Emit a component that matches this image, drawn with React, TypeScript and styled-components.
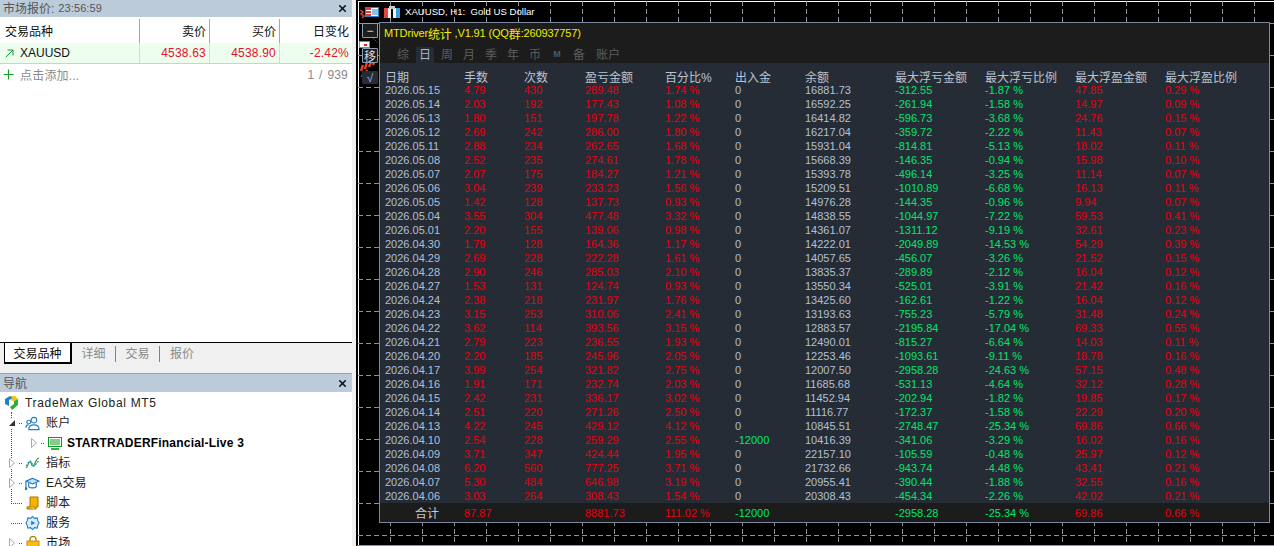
import React from 'react';
import styled, { createGlobalStyle } from 'styled-components';
import { X } from 'lucide-react';

const UI_FONT = `"Liberation Sans", "Noto Sans CJK SC", sans-serif`;

const GlobalStyle = createGlobalStyle`
  html, body {
    margin: 0;
    padding: 0;
    height: 100%;
    overflow: hidden;
    background: #f0f0f0;
    font-family: ${UI_FONT};
  }
  #root { height: 100%; }
  * { box-sizing: border-box; }
`;

const Page = styled.div`
  display: flex;
  width: 1274px;
  height: 546px;
  overflow: hidden;
`;

/* ---------- left side ---------- */

const Sidebar = styled.aside`
  width: 352px;
  flex: none;
  display: flex;
  flex-direction: column;
  background: #fff;
`;

const TitleBar = styled.div`
  flex: none;
  height: ${p => p.$h}px;
  display: flex;
  align-items: center;
  justify-content: space-between;
  padding: 0 4px 0 3px;
  background: #bccbda;
  color: #555;
  font-size: 12px;
  border-top: ${p => (p.$line ? '1px solid #a0a0a0' : 'none')};
`;

const TitleText = styled.span`
  display: flex;
  align-items: center;
  margin-bottom: 2px;
`;

const Clock = styled.span`
  font-size: 11px;
  margin-left: 4px;
  letter-spacing: 0.1px;
`;

const MarketWatch = styled.section`
  flex: 1;
  padding-top: 2px;
  font-size: 12px;
`;

const QuoteRow = styled.div`
  display: grid;
  grid-template-columns: 139px 70px 70px 73px;
  height: ${p => p.$h}px;
  background: ${p => p.$bg || 'transparent'};
  border-bottom: ${p => (p.$underline ? '1px solid #d0d0d0' : 'none')};
`;

const QuoteCell = styled.div`
  display: flex;
  align-items: center;
  justify-content: ${p => (p.$first ? 'flex-start' : 'flex-end')};
  gap: 6px;
  padding: ${p => (p.$first ? '0 0 0 5px' : '0 3px 0 0')};
  padding-bottom: ${p => (p.$head ? 2 : 0)}px;
  color: ${p => p.$color || '#111'};
  border-left: ${p => (p.$first ? 'none' : `1px solid ${p.$sep || '#a8a8a8'}`)};
  letter-spacing: ${p => (p.$num ? '0.2px' : '0')};
`;

const AddRow = styled.div`
  display: flex;
  align-items: center;
  justify-content: space-between;
  height: 21px;
  padding: 0 4px 0 0;
  color: #8a8a8a;
  letter-spacing: 0.2px;
  word-spacing: 1.2px;
`;

const AddLabel = styled.span`
  display: flex;
  align-items: center;
  gap: 3px;
`;

const TabStrip = styled.div`
  flex: none;
  height: 31px;
  display: flex;
  align-items: flex-start;
  background: #f0f0f0;
  border-top: 1px solid #000;
  padding-left: 4px;
  font-size: 12px;
`;

const ActiveTab = styled.div`
  width: 68px;
  height: 22px;
  margin-top: -1px;
  padding-bottom: 1px;
  display: flex;
  align-items: center;
  justify-content: center;
  background: #fff;
  color: #111;
  border-style: solid;
  border-color: #000;
  border-width: 1px 2px 2px 1px;
`;

const Tab = styled.div`
  width: 44px;
  height: 16px;
  margin-top: 3px;
  padding-bottom: 3px;
  display: flex;
  align-items: center;
  justify-content: center;
  color: #8a8a8a;
  border-right: ${p => (p.$last ? 'none' : '1px solid #808080')};
`;

const Navigator = styled.section`
  flex: none;
  height: 154px;
  overflow: hidden;
  position: relative;
  padding-top: 1px;
  font-size: 12px;
  color: #222;
  &::before {
    content: '';
    position: absolute;
    left: 11px;
    top: 20px;
    height: 92px;
    border-left: 1px dotted #555;
  }
`;

const TreeRow = styled.div`
  height: 20px;
  display: flex;
  align-items: center;
  position: relative;
  padding-left: ${p => p.$indent}px;
`;

const ExpanderBox = styled.svg`
  flex: none;
  margin-right: 4px;
  position: relative;
  z-index: 1;
  background: #fff;
`;

const Dots = styled.span`
  width: ${p => p.$w}px;
  flex: none;
  margin-right: 3px;
  border-top: 1px dotted #555;
`;

const TreeIcon = styled.span`
  width: 15px;
  height: 16px;
  flex: none;
  margin-right: ${p => p.$gap}px;
  display: flex;
  align-items: center;
  justify-content: center;
`;

const TreeLabel = styled.span`
  font-weight: ${p => (p.$bold ? 700 : 400)};
  color: ${p => (p.$bold ? '#000' : '#222')};
  letter-spacing: ${p => (p.$bold ? '0.2px' : p.$latin ? '0.67px' : '0.2px')};
  margin-bottom: ${p => (p.$bold || p.$latin ? 0 : 3)}px;
  white-space: nowrap;
`;

/* ---------- chart side ---------- */

const Chart = styled.main`
  position: relative;
  flex: 1;
  margin-left: 4px;
  background: #000;
  border-left: 2px solid #000;
  border-top: 1px solid #000;
  border-bottom: 1px solid #8a96a4;
  box-shadow: inset 1px 0 #fff, inset 0 1px #fff;
  overflow: hidden;
`;

const GridLayer = styled.svg`
  position: absolute;
  left: 0;
  top: 0;
`;

const Caption = styled.div`
  position: relative;
  height: 21px;
  display: flex;
  align-items: center;
  padding: 0 0 0 7px;
  color: #fff;
  font-size: 9.6px;
  gap: 5px;
  white-space: pre;
`;

const ChartBody = styled.div`
  position: relative;
  display: flex;
  gap: 1px;
  padding-left: 4px;
`;

const Tools = styled.div`
  width: 16px;
  flex: none;
  display: flex;
  flex-direction: column;
  gap: 10px;
  padding-top: 1px;
`;

const ToolButton = styled.div`
  width: 16px;
  height: ${p => p.$h}px;
  margin-top: ${p => p.$mt || 0}px;
  display: flex;
  align-items: center;
  justify-content: center;
  border-radius: 1px;
  font-size: 12px;
  background: ${p => (p.$plain ? '#262c35' : '#1c1c1c')};
  border: ${p => (p.$plain ? 'none' : '1px solid #8d9db3')};
  color: ${p => (p.$plain ? '#9fb0c6' : '#d8dee8')};
`;

const StatsPanel = styled.section`
  width: 891px;
  height: 501px;
  flex: none;
  display: flex;
  flex-direction: column;
  border: 1px solid #7b899e;
  background: #262c35;
  font-size: 11px;
`;

const PanelHead = styled.header`
  height: 40px;
  flex: none;
  display: flex;
  flex-direction: column;
  background: #1c1c1c;
`;

const PanelTitle = styled.div`
  height: 24px;
  padding: 0 0 4px 4px;
  display: flex;
  align-items: center;
  color: #eeee00;
  font-size: 11px;
  letter-spacing: -0.15px;
  white-space: pre;
`;

const CjkRun = styled.span`
  font-size: 12px;
`;

const PeriodTabs = styled.nav`
  height: 16px;
  display: flex;
  padding-left: 14px;
  font-size: 12px;
`;

const PeriodTab = styled.span`
  min-width: ${p => (p.$wide ? 24 : 18)}px;
  margin-right: 4px;
  margin-left: ${p => (p.$wide ? 4 : 0)}px;
  padding-bottom: 3px;
  display: flex;
  align-items: center;
  justify-content: center;
  color: ${p => (p.$active ? '#a9b8cc' : p.$blue ? '#4a5a6e' : '#5c5c5c')};
  background: ${p => (p.$active ? '#262c35' : 'transparent')};
  font-weight: ${p => (p.$blue ? 700 : 400)};
  font-size: ${p => (p.$blue ? 9 : 12)}px;
  border-radius: 2px 2px 0 0;
`;

const COLUMNS = '79px 60px 61px 80px 70px 70px 90px 90px 90px 90px 1fr';

const HeadRow = styled.div`
  height: 20px;
  flex: none;
  display: grid;
  grid-template-columns: ${COLUMNS};
  align-items: center;
  padding: 5px 0 0 5px;
  color: #b8c4d6;
  font-size: 12px;
`;

const Rows = styled.div`
  flex: 1;
`;

const DataRow = styled.div`
  height: 14px;
  display: grid;
  grid-template-columns: ${COLUMNS};
  align-items: center;
  padding-left: 5px;
  line-height: 14px;
`;

const Cell = styled.span`
  color: ${p => p.$color};
  white-space: nowrap;
`;

const TotalRow = styled.footer`
  height: 19px;
  flex: none;
  display: grid;
  grid-template-columns: ${COLUMNS};
  align-items: center;
  padding-left: 5px;
  background: #1c1c1c;
`;

const TotalLabel = styled.span`
  padding-left: 30px;
  color: #c4ccd8;
  font-size: 12px;
`;

/* ---------- drawings ---------- */

const Expander = ({ open }: { open?: boolean }) => (
  <ExpanderBox width="6" height="10" viewBox="0 0 6 10">
    {open ? (
      <path d="M0 8L6 2v6z" fill="#333" />
    ) : (
      <path d="M.5 .5L5.5 5 .5 9.5z" fill="#fff" stroke="#a8a8a8" />
    )}
  </ExpanderBox>
);

const UpArrow = () => (
  <svg width="9" height="9" viewBox="0 0 9 9" fill="none" stroke="#109a30" strokeWidth="1">
    <path d="M.8 8.2L7.8 1.2M2.5 1h5.5v5.5" />
  </svg>
);

const AddIcon = () => (
  <svg width="17" height="17" viewBox="0 0 17 17" fill="none" stroke="#0fa02a" strokeWidth="1.2">
    <path d="M3.5 8.5h10M8.5 3.5v10" />
  </svg>
);

const LogoIcon = () => (
  <svg width="15" height="16" viewBox="0 0 15 16">
    <path d="M1 4l5-3 3 2-4 2v6L1 9z" fill="#1c7fd0" />
    <path d="M6 1h5l3 3-4 2-4-1 3-2z" fill="#f2c40f" />
    <path d="M14 4v6l-6 5-2-3 4-3V6z" fill="#2fae3a" />
  </svg>
);

const AccountsIcon = () => (
  <svg width="16" height="15" viewBox="0 0 16 15" fill="none" stroke="#1f7fc8" strokeWidth="1.2">
    <circle cx="9.5" cy="4" r="3" />
    <path d="M4 14c0-4 2-5 5.5-5s5.5 1 5.5 5z" />
    <circle cx="4" cy="6" r="2" />
    <path d="M1 12c0-2 .8-3 2.6-3" />
  </svg>
);

const ServerIcon = () => (
  <svg width="14" height="13" viewBox="0 0 14 13" fill="none">
    <rect x="0.5" y="0.5" width="13" height="9" fill="#fff" stroke="#0c9a1a" />
    <path d="M2 3h10M2 5h10M2 7h10" stroke="#0c9a1a" />
    <path d="M3 12h8" stroke="#0c9a1a" strokeWidth="1.6" />
  </svg>
);

const IndicatorIcon = () => (
  <svg width="15" height="12" viewBox="0 0 15 12" fill="none" strokeWidth="1.2">
    <path d="M1 11c2-1 2-6 4-6s1 4 3 4 2-7 6-8" stroke="#25a244" />
    <path d="M1 9c2-1 2-5 4-5s2 5 4 5 2-4 5-5" stroke="#1f7fc8" strokeDasharray="2 1" />
  </svg>
);

const CapIcon = () => (
  <svg width="16" height="15" viewBox="0 0 16 15" fill="none" stroke="#1573b8" strokeWidth="1.2">
    <path d="M8 2L1 5l7 3 7-3z" fill="#bfe0f5" />
    <path d="M4 7v4c1.5 1.6 6.5 1.6 8 0V7" />
    <path d="M1 5v7" />
    <circle cx="1" cy="13" r="0.8" fill="#1573b8" />
  </svg>
);

const ScriptIcon = () => (
  <svg width="14" height="14" viewBox="0 0 14 14">
    <path d="M4 1h8v10H10v2H1v-2h3z" fill="#f4b400" stroke="#a87400" strokeWidth="1" />
    <path d="M1 11h8v2" fill="#ffe08a" stroke="#a87400" strokeWidth="0.8" />
  </svg>
);

const ServiceIcon = () => (
  <svg width="16" height="16" viewBox="0 0 16 16" fill="#d8ecfa" stroke="#1f7fc8" strokeWidth="1.2">
    <path d="M8 1l2 2 3-.5.6 3L15 8l-1.4 2.5-.6 3-3-.5-2 2-2-2-3 .5-.6-3L1 8l1.4-2.5.6-3 3 .5z" />
    <path d="M6.5 5.5L11 8l-4.5 2.5z" fill="#1f7fc8" stroke="none" />
  </svg>
);

const BagIcon = () => (
  <svg width="14" height="15" viewBox="0 0 14 15" fill="none">
    <path d="M4 6V3.5a3 3 0 016 0V6" stroke="#a87400" strokeWidth="1.2" />
    <rect x="1" y="5" width="12" height="10" fill="#f6bd16" stroke="#c98f00" />
  </svg>
);

const ListIcon = () => (
  <svg width="14" height="10" viewBox="0 0 14 10">
    <rect x="0.5" y="0.5" width="13" height="9" fill="#fff" stroke="#2b7fc4" />
    <rect x="1" y="1" width="5" height="8" fill="#e23b3b" />
    <path d="M1 3.5h5M1 6.5h5" stroke="#fff" />
    <path d="M7 3h6M7 5h6M7 7h6" stroke="#2b7fc4" />
  </svg>
);

const PairIcon = () => (
  <svg width="16" height="12" viewBox="0 0 16 12">
    <path d="M0 2h7v10H0z" fill="#f2f2f2" />
    <path d="M0 2h4v10H0z" fill="#e2453d" />
    <path d="M9 2h7v10H9z" fill="#f2f2f2" />
    <path d="M12 2h4v10h-4z" fill="#3b9be0" />
    <rect x="5" y="0" width="6" height="3" fill="#c8c8c8" />
  </svg>
);

const ChartGrid = () => {
  const xs = Array.from({ length: 29 }, (_, i) => 32 + i * 32);
  const ys = Array.from({ length: 17 }, (_, i) => 22 + i * 32);
  return (
    <GridLayer width="918" height="544">
      {xs.map(x => (
        <line key={x} x1={x + 0.5} x2={x + 0.5} y1="0" y2="544" stroke="#8c939c" strokeDasharray="5 3" />
      ))}
      {ys.map(y => (
        <line key={y} x1="0" x2="918" y1={y + 0.5} y2={y + 0.5} stroke="#8c939c" strokeDasharray="5 3" />
      ))}
      {/* price action peeking out left of the panel */}
      <path d="M2 9l3 2-2 2 3 2-2 2" stroke="#f0401e" strokeWidth="1.5" fill="none" />
      <rect x="1.5" y="40.5" width="10" height="6" fill="#fff" stroke="#17d417" />
      <rect x="6" y="43" width="3" height="2" fill="#e02020" />
      <path d="M15 37l5 5" stroke="#d02010" strokeDasharray="2 1" />
      <path
        d="M3 70l2-6M7 68l2-7M11 66l2-5M15 64l1-3M4 76l2-5M8 72l1-3"
        stroke="#f0401e"
        strokeWidth="2.4"
        fill="none"
      />
    </GridLayer>
  );
};

/* ---------- data ---------- */

type Day = [string, string, string, string, string, string, string, string, string, string, string];

const days: Day[] = [
  ['2026.05.15', '4.79', '430', '289.48', '1.74', '0', '16881.73', '-312.55', '-1.87', '47.85', '0.29'],
  ['2026.05.14', '2.03', '192', '177.43', '1.08', '0', '16592.25', '-261.94', '-1.58', '14.97', '0.09'],
  ['2026.05.13', '1.80', '151', '197.78', '1.22', '0', '16414.82', '-596.73', '-3.68', '24.76', '0.15'],
  ['2026.05.12', '2.69', '242', '286.00', '1.80', '0', '16217.04', '-359.72', '-2.22', '11.43', '0.07'],
  ['2026.05.11', '2.88', '234', '262.65', '1.68', '0', '15931.04', '-814.81', '-5.13', '18.02', '0.11'],
  ['2026.05.08', '2.52', '235', '274.61', '1.78', '0', '15668.39', '-146.35', '-0.94', '15.98', '0.10'],
  ['2026.05.07', '2.07', '175', '184.27', '1.21', '0', '15393.78', '-496.14', '-3.25', '11.14', '0.07'],
  ['2026.05.06', '3.04', '239', '233.23', '1.56', '0', '15209.51', '-1010.89', '-6.68', '16.13', '0.11'],
  ['2026.05.05', '1.42', '128', '137.73', '0.93', '0', '14976.28', '-144.35', '-0.96', '9.94', '0.07'],
  ['2026.05.04', '3.55', '304', '477.48', '3.32', '0', '14838.55', '-1044.97', '-7.22', '59.53', '0.41'],
  ['2026.05.01', '2.20', '155', '139.06', '0.98', '0', '14361.07', '-1311.12', '-9.19', '32.61', '0.23'],
  ['2026.04.30', '1.79', '128', '164.36', '1.17', '0', '14222.01', '-2049.89', '-14.53', '54.29', '0.39'],
  ['2026.04.29', '2.69', '228', '222.28', '1.61', '0', '14057.65', '-456.07', '-3.26', '21.52', '0.15'],
  ['2026.04.28', '2.90', '246', '285.03', '2.10', '0', '13835.37', '-289.89', '-2.12', '16.04', '0.12'],
  ['2026.04.27', '1.53', '131', '124.74', '0.93', '0', '13550.34', '-525.01', '-3.91', '21.42', '0.16'],
  ['2026.04.24', '2.38', '218', '231.97', '1.76', '0', '13425.60', '-162.61', '-1.22', '16.04', '0.12'],
  ['2026.04.23', '3.15', '253', '310.06', '2.41', '0', '13193.63', '-755.23', '-5.79', '31.48', '0.24'],
  ['2026.04.22', '3.62', '114', '393.56', '3.15', '0', '12883.57', '-2195.84', '-17.04', '69.33', '0.55'],
  ['2026.04.21', '2.79', '223', '236.55', '1.93', '0', '12490.01', '-815.27', '-6.64', '14.03', '0.11'],
  ['2026.04.20', '2.20', '185', '245.96', '2.05', '0', '12253.46', '-1093.61', '-9.11', '18.78', '0.16'],
  ['2026.04.17', '3.99', '254', '321.82', '2.75', '0', '12007.50', '-2958.28', '-24.63', '57.15', '0.48'],
  ['2026.04.16', '1.91', '171', '232.74', '2.03', '0', '11685.68', '-531.13', '-4.64', '32.12', '0.28'],
  ['2026.04.15', '2.42', '231', '336.17', '3.02', '0', '11452.94', '-202.94', '-1.82', '19.85', '0.17'],
  ['2026.04.14', '2.51', '220', '271.26', '2.50', '0', '11116.77', '-172.37', '-1.58', '22.29', '0.20'],
  ['2026.04.13', '4.22', '245', '429.12', '4.12', '0', '10845.51', '-2748.47', '-25.34', '69.86', '0.66'],
  ['2026.04.10', '2.54', '228', '259.29', '2.55', '-12000', '10416.39', '-341.06', '-3.29', '16.02', '0.16'],
  ['2026.04.09', '3.71', '347', '424.44', '1.95', '0', '22157.10', '-105.59', '-0.48', '25.97', '0.12'],
  ['2026.04.08', '6.20', '560', '777.25', '3.71', '0', '21732.66', '-943.74', '-4.48', '43.41', '0.21'],
  ['2026.04.07', '5.30', '484', '646.98', '3.19', '0', '20955.41', '-390.44', '-1.88', '32.55', '0.16'],
  ['2026.04.06', '3.03', '264', '308.43', '1.54', '0', '20308.43', '-454.34', '-2.26', '42.02', '0.21'],
];

const heads = ['日期', '手数', '次数', '盈亏金额', '百分比%', '出入金', '余额', '最大浮亏金额', '最大浮亏比例', '最大浮盈金额', '最大浮盈比例'];
const periods = ['综', '日', '周', '月', '季', '年', '币', 'M', '备', '账户'];

const RED = '#e8000e';
const GREEN = '#00e56a';
const BLUE_GREY = '#b0c0d6';

const App: React.FC = () => {
  return (
    <Page>
      <GlobalStyle />
      <Sidebar>
        <TitleBar $h={17}>
          <TitleText>
            市场报价:<Clock>23:56:59</Clock>
          </TitleText>
          <X size={11} strokeWidth={3.5} color="#111" />
        </TitleBar>
        <MarketWatch>
          <QuoteRow $h={24}>
            <QuoteCell $first $head>交易品种</QuoteCell>
            <QuoteCell $head>卖价</QuoteCell>
            <QuoteCell $head>买价</QuoteCell>
            <QuoteCell $head>日变化</QuoteCell>
          </QuoteRow>
          <QuoteRow $h={21} $bg="#edfdee" $underline>
            <QuoteCell $first>
              <UpArrow />
              XAUUSD
            </QuoteCell>
            <QuoteCell $color="#e8102a" $sep="#d8d8d8" $num>4538.63</QuoteCell>
            <QuoteCell $color="#e8102a" $sep="#d8d8d8" $num>4538.90</QuoteCell>
            <QuoteCell $color="#e8102a" $sep="#d8d8d8" $num>-2.42%</QuoteCell>
          </QuoteRow>
          <AddRow>
            <AddLabel>
              <AddIcon />
              点击添加...
            </AddLabel>
            <span>1 / 939</span>
          </AddRow>
        </MarketWatch>
        <TabStrip>
          <ActiveTab>交易品种</ActiveTab>
          <Tab>详细</Tab>
          <Tab>交易</Tab>
          <Tab $last>报价</Tab>
        </TabStrip>
        <TitleBar $h={19} $line>
          <TitleText>导航</TitleText>
          <X size={11} strokeWidth={3.5} color="#111" />
        </TitleBar>
        <Navigator>
          <TreeRow $indent={4}>
            <TreeIcon $gap={6}><LogoIcon /></TreeIcon>
            <TreeLabel $latin>TradeMax Global MT5</TreeLabel>
          </TreeRow>
          <TreeRow $indent={9}>
            <Expander open />
            <Dots $w={3} />
            <TreeIcon $gap={6}><AccountsIcon /></TreeIcon>
            <TreeLabel>账户</TreeLabel>
          </TreeRow>
          <TreeRow $indent={31}>
            <Expander />
            <Dots $w={3} />
            <TreeIcon $gap={5}><ServerIcon /></TreeIcon>
            <TreeLabel $bold>STARTRADERFinancial-Live 3</TreeLabel>
          </TreeRow>
          <TreeRow $indent={9}>
            <Expander />
            <Dots $w={3} />
            <TreeIcon $gap={6}><IndicatorIcon /></TreeIcon>
            <TreeLabel>指标</TreeLabel>
          </TreeRow>
          <TreeRow $indent={9}>
            <Expander />
            <Dots $w={3} />
            <TreeIcon $gap={6}><CapIcon /></TreeIcon>
            <TreeLabel>EA交易</TreeLabel>
          </TreeRow>
          <TreeRow $indent={11}>
            <Dots $w={11} />
            <TreeIcon $gap={6}><ScriptIcon /></TreeIcon>
            <TreeLabel>脚本</TreeLabel>
          </TreeRow>
          <TreeRow $indent={11}>
            <Dots $w={11} />
            <TreeIcon $gap={6}><ServiceIcon /></TreeIcon>
            <TreeLabel>服务</TreeLabel>
          </TreeRow>
          <TreeRow $indent={9}>
            <Expander />
            <Dots $w={3} />
            <TreeIcon $gap={6}><BagIcon /></TreeIcon>
            <TreeLabel>市场</TreeLabel>
          </TreeRow>
        </Navigator>
      </Sidebar>

      <Chart>
        <ChartGrid />
        <Caption>
          <ListIcon />
          <PairIcon />
          <span>XAUUSD, H1:  Gold US Dollar</span>
        </Caption>
        <ChartBody>
          <Tools>
            <ToolButton $h={15}>−</ToolButton>
            <ToolButton $h={15}>移</ToolButton>
            <ToolButton $h={13} $plain $mt={-2}>√</ToolButton>
          </Tools>
          <StatsPanel>
            <PanelHead>
              <PanelTitle>
                MTDriver<CjkRun>统计</CjkRun> ,V1.91 (QQ<CjkRun>群</CjkRun>:260937757)
              </PanelTitle>
              <PeriodTabs>
                {periods.map(p => (
                  <PeriodTab key={p} $active={p === '日'} $blue={p === 'M'} $wide={p === '账户'}>
                    {p}
                  </PeriodTab>
                ))}
              </PeriodTabs>
            </PanelHead>
            <HeadRow>
              {heads.map(h => (
                <span key={h}>{h}</span>
              ))}
            </HeadRow>
            <Rows>
              {days.map(d => (
                <DataRow key={d[0]}>
                  <Cell $color={BLUE_GREY}>{d[0]}</Cell>
                  <Cell $color={RED}>{d[1]}</Cell>
                  <Cell $color={RED}>{d[2]}</Cell>
                  <Cell $color={RED}>{d[3]}</Cell>
                  <Cell $color={RED}>{d[4]} %</Cell>
                  <Cell $color={d[5] === '0' ? BLUE_GREY : GREEN}>{d[5]}</Cell>
                  <Cell $color={BLUE_GREY}>{d[6]}</Cell>
                  <Cell $color={GREEN}>{d[7]}</Cell>
                  <Cell $color={GREEN}>{d[8]} %</Cell>
                  <Cell $color={RED}>{d[9]}</Cell>
                  <Cell $color={RED}>{d[10]} %</Cell>
                </DataRow>
              ))}
            </Rows>
            <TotalRow>
              <TotalLabel>合计</TotalLabel>
              <Cell $color={RED}>87.87</Cell>
              <Cell $color={RED} />
              <Cell $color={RED}>8881.73</Cell>
              <Cell $color={RED}>111.02 %</Cell>
              <Cell $color={GREEN}>-12000</Cell>
              <Cell $color={BLUE_GREY} />
              <Cell $color={GREEN}>-2958.28</Cell>
              <Cell $color={GREEN}>-25.34 %</Cell>
              <Cell $color={RED}>69.86</Cell>
              <Cell $color={RED}>0.66 %</Cell>
            </TotalRow>
          </StatsPanel>
        </ChartBody>
      </Chart>
    </Page>
  );
};

export default App;
